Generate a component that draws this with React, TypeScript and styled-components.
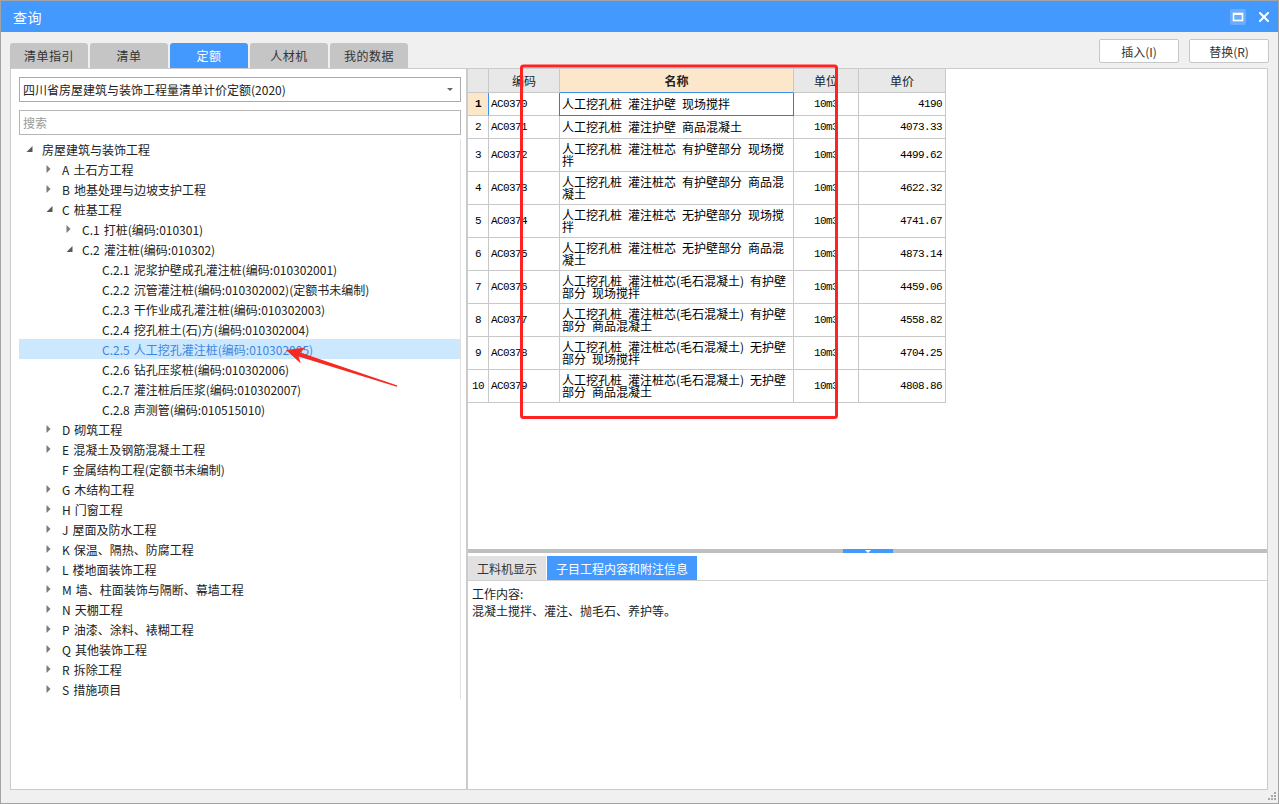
import React from "react";
import styled, { createGlobalStyle } from "styled-components";

const GlobalStyle = createGlobalStyle`
  html, body { margin: 0; padding: 0; background: #ffffff; }
  body {
    font-family: "Noto Sans CJK SC", "Noto Sans", sans-serif;
    font-size: 12px;
    color: #222;
  }
  * { box-sizing: border-box; }
`;

const Root = styled.div`
  position: relative;
  width: 1279px;
  height: 804px;
  overflow: hidden;
`;

const Window = styled.div`
  width: 1279px;
  height: 804px;
  border: 1px solid #a3a3a3;
  background: #f0f0f0;
  display: flex;
  flex-direction: column;
`;

const TitleBar = styled.div`
  flex: 0 0 31px;
  background: #4499ff;
  display: flex;
  align-items: center;
  padding: 0 9px 0 12px;
  color: #fff;
`;

const Title = styled.div`
  font-size: 14px;
  flex: 1;
  letter-spacing: 0.5px;
`;

const TitleButtons = styled.div`
  display: flex;
  align-items: center;
  gap: 13px;
`;

const Toolbar = styled.div`
  flex: 0 0 36px;
  display: flex;
  align-items: flex-end;
  padding: 0 9px;
`;

const TabRow = styled.div`
  display: flex;
  gap: 2px;
`;

const TopTab = styled.div<{ $active?: boolean }>`
  width: 78px;
  height: 25px;
  border-radius: 3px 3px 0 0;
  background: ${(p) => (p.$active ? "#4499ff" : "#c5c5c5")};
  color: ${(p) => (p.$active ? "#fff" : "#333")};
  font-size: 12px;
  display: flex;
  align-items: center;
  justify-content: center;
  letter-spacing: 0.5px;
`;

const ButtonGroup = styled.div`
  margin-left: auto;
  align-self: flex-start;
  margin-top: 7px;
  display: flex;
  gap: 10px;
`;

const ActionButton = styled.div`
  width: 80px;
  height: 24px;
  background: #fff;
  border: 1px solid #c6c6c6;
  border-radius: 2px;
  color: #333;
  font-size: 12px;
  display: flex;
  align-items: center;
  justify-content: center;
`;

const Main = styled.div`
  flex: 0 0 722px;
  display: flex;
  padding: 0 10px 0 9px;
`;

const LeftPanel = styled.div`
  width: 457px;
  background: #fff;
  border: 1px solid #cbcbcb;
  padding: 8px 0 0 8px;
  display: flex;
  flex-direction: column;
`;

const Select = styled.div`
  width: 442px;
  height: 25px;
  border: 1px solid #ababab;
  display: flex;
  align-items: center;
  padding-left: 3px;
  color: #222;
  font-size: 12px;
`;

const SelectArrow = styled.span`
  margin-left: auto;
  margin-right: 7px;
  width: 0;
  height: 0;
  border-left: 3px solid transparent;
  border-right: 3px solid transparent;
  border-top: 3px solid #666;
`;

const Search = styled.div`
  width: 442px;
  height: 25px;
  margin-top: 8px;
  border: 1px solid #b5b5b5;
  display: flex;
  align-items: center;
  padding-left: 3px;
  color: #9a9a9a;
  font-size: 12px;
`;

const Tree = styled.div`
  margin-top: 4px;
  width: 442px;
  border-right: 1px solid #e2e2e2;
  display: flex;
  flex-direction: column;
`;

const TreeRow = styled.div<{ $level: number; $selected?: boolean }>`
  height: 20px;
  display: flex;
  align-items: center;
  padding-left: ${(p) => 7 + p.$level * 20}px;
  background: ${(p) => (p.$selected ? "#cce8ff" : "transparent")};
  color: ${(p) => (p.$selected ? "#3d87de" : "#222")};
  font-size: 12px;
  word-spacing: 1.4px;
  white-space: pre;
`;

const Toggle = styled.span`
  width: 16px;
  height: 20px;
  flex: 0 0 16px;
  display: flex;
  align-items: center;
`;

const RightPanel = styled.div`
  flex: 1;
  background: #fff;
  border: 1px solid #cbcbcb;
  display: flex;
  flex-direction: column;
`;

const GridArea = styled.div`
  flex: 0 0 480px;
`;

const GridRow = styled.div<{ $h: number }>`
  display: flex;
  height: ${(p) => p.$h}px;
`;

type CellKind = "num" | "code" | "name" | "unit" | "price";

const widths: Record<CellKind, number> = { num: 21, code: 71, name: 234, unit: 65, price: 87 };

const HeadCell = styled.div<{ $kind: CellKind; $active?: boolean }>`
  width: ${(p) => widths[p.$kind]}px;
  flex: 0 0 ${(p) => widths[p.$kind]}px;
  border-right: 1px solid #c8c8c8;
  border-bottom: 1px solid ${(p) => (p.$active ? "#3b93f0" : "#c8c8c8")};
  background: ${(p) => (p.$active ? "#fde7cb" : "#e8e8e8")};
  font-weight: ${(p) => (p.$active ? 700 : 400)};
  color: #222;
  font-size: 12px;
  display: flex;
  align-items: center;
  justify-content: center;
`;

const Cell = styled.div<{ $kind: CellKind; $selected?: boolean; $current?: boolean }>`
  width: ${(p) => widths[p.$kind]}px;
  flex: 0 0 ${(p) => widths[p.$kind]}px;
  border-right: 1px solid
    ${(p) => (p.$selected ? "#6f6f6f" : p.$current && p.$kind === "num" ? "#3b93f0" : "#c8c8c8")};
  border-bottom: 1px solid ${(p) => (p.$selected ? "#6f6f6f" : "#c8c8c8")};
  box-shadow: ${(p) => (p.$selected ? "-1px 0 0 #6f6f6f" : "none")};
  background: ${(p) => (p.$current && p.$kind === "num" ? "#fde7cb" : "#fff")};
  color: #000;
  display: flex;
  align-items: center;
  justify-content: ${(p) =>
    p.$kind === "num" || p.$kind === "unit" ? "center" : p.$kind === "price" ? "flex-end" : "flex-start"};
  padding: ${(p) => (p.$kind === "price" ? "0 3px 0 0" : p.$kind === "code" || p.$kind === "name" ? "0 0 0 2px" : "0")};
  font-family: ${(p) =>
    p.$kind === "name" ? `"Noto Sans CJK SC", sans-serif` : `"Liberation Mono", "DejaVu Sans Mono", monospace`};
  font-size: ${(p) => (p.$kind === "name" ? "12px" : "11px")};
  letter-spacing: ${(p) => (p.$kind === "name" ? "0" : "-0.6px")};
  font-weight: ${(p) => (p.$current && p.$kind === "num" ? 700 : 400)};
`;

const NameText = styled.div`
  line-height: 12.5px;
  word-spacing: 3.3px;
  word-break: break-all;
`;

const Splitter = styled.div`
  flex: 0 0 4px;
  background: #bfbfbf;
  display: flex;
`;

const SplitHandle = styled.div`
  margin-left: 375px;
  width: 50px;
  height: 4px;
  background: #4499ff;
  display: flex;
  justify-content: center;
  align-items: flex-start;
  padding-top: 1px;
`;

const SplitArrow = styled.span`
  width: 0;
  height: 0;
  border-left: 3px solid transparent;
  border-right: 3px solid transparent;
  border-top: 3px solid #fff;
`;

const BottomTabs = styled.div`
  flex: 0 0 27px;
  display: flex;
  align-items: flex-end;
  gap: 1px;
`;

const BottomTab = styled.div<{ $active?: boolean }>`
  height: 24px;
  padding: 0 9px;
  background: ${(p) => (p.$active ? "#4499ff" : "#e1e1e1")};
  color: ${(p) => (p.$active ? "#fff" : "#333")};
  font-size: 12px;
  display: flex;
  align-items: center;
`;

const InfoContent = styled.div`
  flex: 1;
  border-top: 1px solid #cfcfcf;
  padding: 4px 4px;
  font-size: 12px;
  line-height: 17px;
  color: #222;
`;

const BottomStrip = styled.div`
  flex: 1;
  display: flex;
  justify-content: flex-end;
  align-items: flex-end;
  padding: 0 1px 2px 0;
`;

const Overlay = styled.svg`
  position: absolute;
  left: 0;
  top: 0;
  width: 1279px;
  height: 804px;
  pointer-events: none;
`;

type Node = { label: string; level: number; toggle?: "open" | "closed"; selected?: boolean };

const tree: Node[] = [
  { label: "房屋建筑与装饰工程", level: 0, toggle: "open" },
  { label: "A 土石方工程", level: 1, toggle: "closed" },
  { label: "B 地基处理与边坡支护工程", level: 1, toggle: "closed" },
  { label: "C 桩基工程", level: 1, toggle: "open" },
  { label: "C.1 打桩(编码:010301)", level: 2, toggle: "closed" },
  { label: "C.2 灌注桩(编码:010302)", level: 2, toggle: "open" },
  { label: "C.2.1 泥浆护壁成孔灌注桩(编码:010302001)", level: 3 },
  { label: "C.2.2 沉管灌注桩(编码:010302002)(定额书未编制)", level: 3 },
  { label: "C.2.3 干作业成孔灌注桩(编码:010302003)", level: 3 },
  { label: "C.2.4 挖孔桩土(石)方(编码:010302004)", level: 3 },
  { label: "C.2.5 人工挖孔灌注桩(编码:010302005)", level: 3, selected: true },
  { label: "C.2.6 钻孔压浆桩(编码:010302006)", level: 3 },
  { label: "C.2.7 灌注桩后压浆(编码:010302007)", level: 3 },
  { label: "C.2.8 声测管(编码:010515010)", level: 3 },
  { label: "D 砌筑工程", level: 1, toggle: "closed" },
  { label: "E 混凝土及钢筋混凝土工程", level: 1, toggle: "closed" },
  { label: "F 金属结构工程(定额书未编制)", level: 1 },
  { label: "G 木结构工程", level: 1, toggle: "closed" },
  { label: "H 门窗工程", level: 1, toggle: "closed" },
  { label: "J 屋面及防水工程", level: 1, toggle: "closed" },
  { label: "K 保温、隔热、防腐工程", level: 1, toggle: "closed" },
  { label: "L 楼地面装饰工程", level: 1, toggle: "closed" },
  { label: "M 墙、柱面装饰与隔断、幕墙工程", level: 1, toggle: "closed" },
  { label: "N 天棚工程", level: 1, toggle: "closed" },
  { label: "P 油漆、涂料、裱糊工程", level: 1, toggle: "closed" },
  { label: "Q 其他装饰工程", level: 1, toggle: "closed" },
  { label: "R 拆除工程", level: 1, toggle: "closed" },
  { label: "S 措施项目", level: 1, toggle: "closed" },
];

const rows = [
  { code: "AC0370", name: "人工挖孔桩 灌注护壁 现场搅拌", price: "4190" },
  { code: "AC0371", name: "人工挖孔桩 灌注护壁 商品混凝土", price: "4073.33" },
  { code: "AC0372", name: "人工挖孔桩 灌注桩芯 有护壁部分 现场搅拌", price: "4499.62" },
  { code: "AC0373", name: "人工挖孔桩 灌注桩芯 有护壁部分 商品混凝土", price: "4622.32" },
  { code: "AC0374", name: "人工挖孔桩 灌注桩芯 无护壁部分 现场搅拌", price: "4741.67" },
  { code: "AC0375", name: "人工挖孔桩 灌注桩芯 无护壁部分 商品混凝土", price: "4873.14" },
  { code: "AC0376", name: "人工挖孔桩 灌注桩芯(毛石混凝土) 有护壁部分 现场搅拌", price: "4459.06" },
  { code: "AC0377", name: "人工挖孔桩 灌注桩芯(毛石混凝土) 有护壁部分 商品混凝土", price: "4558.82" },
  { code: "AC0378", name: "人工挖孔桩 灌注桩芯(毛石混凝土) 无护壁部分 现场搅拌", price: "4704.25" },
  { code: "AC0379", name: "人工挖孔桩 灌注桩芯(毛石混凝土) 无护壁部分 商品混凝土", price: "4808.86" },
];

const ToggleIcon = ({ kind }: { kind?: "open" | "closed" }) => {
  if (!kind) return <Toggle />;
  return (
    <Toggle>
      {kind === "closed" ? (
        <svg width="8" height="8" viewBox="0 0 8 8">
          <polygon points="0.5,0 4.5,4 0.5,8" fill="#7a7a7a" />
        </svg>
      ) : (
        <svg width="8" height="8" viewBox="0 0 8 8">
          <polygon points="6.5,1 6.5,7 0.5,7" fill="#5a5a5a" />
        </svg>
      )}
    </Toggle>
  );
};

export default function App() {
  return (
    <Root>
      <GlobalStyle />
      <Window>
        <TitleBar>
          <Title>查询</Title>
          <TitleButtons>
            <svg width="16" height="16" viewBox="0 0 16 16">
              <rect x="0" y="0" width="16" height="16" rx="2" fill="#68aeff" />
              <rect x="3.5" y="4.5" width="9" height="7" fill="none" stroke="#fff" strokeWidth="1.6" />
              <rect x="3" y="4" width="10" height="2" fill="#fff" />
            </svg>
            <svg width="10" height="10" viewBox="0 0 10 10">
              <path d="M1 1 L9 9 M9 1 L1 9" stroke="#fff" strokeWidth="2" strokeLinecap="square" />
            </svg>
          </TitleButtons>
        </TitleBar>

        <Toolbar>
          <TabRow>
            <TopTab>清单指引</TopTab>
            <TopTab>清单</TopTab>
            <TopTab $active>定额</TopTab>
            <TopTab>人材机</TopTab>
            <TopTab>我的数据</TopTab>
          </TabRow>
          <ButtonGroup>
            <ActionButton>插入(I)</ActionButton>
            <ActionButton>替换(R)</ActionButton>
          </ButtonGroup>
        </Toolbar>

        <Main>
          <LeftPanel>
            <Select>
              四川省房屋建筑与装饰工程量清单计价定额(2020)
              <SelectArrow />
            </Select>
            <Search>搜索</Search>
            <Tree>
              {tree.map((n, i) => (
                <TreeRow key={i} $level={n.level} $selected={n.selected}>
                  <ToggleIcon kind={n.toggle} />
                  {n.label}
                </TreeRow>
              ))}
            </Tree>
          </LeftPanel>

          <RightPanel>
            <GridArea>
              <GridRow $h={24}>
                <HeadCell $kind="num" />
                <HeadCell $kind="code">编码</HeadCell>
                <HeadCell $kind="name" $active>
                  名称
                </HeadCell>
                <HeadCell $kind="unit">单位</HeadCell>
                <HeadCell $kind="price">单价</HeadCell>
              </GridRow>
              {rows.map((r, i) => (
                <GridRow key={r.code} $h={i < 2 ? 23 : 33}>
                  <Cell $kind="num" $current={i === 0}>
                    {i + 1}
                  </Cell>
                  <Cell $kind="code">{r.code}</Cell>
                  <Cell $kind="name" $selected={i === 0}>
                    <NameText>{r.name}</NameText>
                  </Cell>
                  <Cell $kind="unit">10m3</Cell>
                  <Cell $kind="price">{r.price}</Cell>
                </GridRow>
              ))}
            </GridArea>
            <Splitter>
              <SplitHandle>
                <SplitArrow />
              </SplitHandle>
            </Splitter>
            <BottomTabs>
              <BottomTab>工料机显示</BottomTab>
              <BottomTab $active>子目工程内容和附注信息</BottomTab>
            </BottomTabs>
            <InfoContent>
              <div>工作内容:</div>
              <div>混凝土搅拌、灌注、抛毛石、养护等。</div>
            </InfoContent>
          </RightPanel>
        </Main>

        <BottomStrip>
          <svg width="9" height="9" viewBox="0 0 9 9">
            <rect x="6" y="0" width="2" height="2" fill="#a8a8a8" />
            <rect x="3" y="3" width="2" height="2" fill="#a8a8a8" />
            <rect x="6" y="3" width="2" height="2" fill="#a8a8a8" />
            <rect x="0" y="6" width="2" height="2" fill="#a8a8a8" />
            <rect x="3" y="6" width="2" height="2" fill="#a8a8a8" />
            <rect x="6" y="6" width="2" height="2" fill="#a8a8a8" />
          </svg>
        </BottomStrip>
      </Window>

      <Overlay viewBox="0 0 1279 804">
        <rect x="521.5" y="66" width="315" height="351.5" rx="2" fill="none" stroke="#ff2222" strokeWidth="3" />
        <polygon
          points="286,350 305.6,347.6 300.2,352.6 397.4,385.4 396.8,386.8 298.6,356.6 300.8,363.6"
          fill="#f52a22"
        />
      </Overlay>
    </Root>
  );
}
